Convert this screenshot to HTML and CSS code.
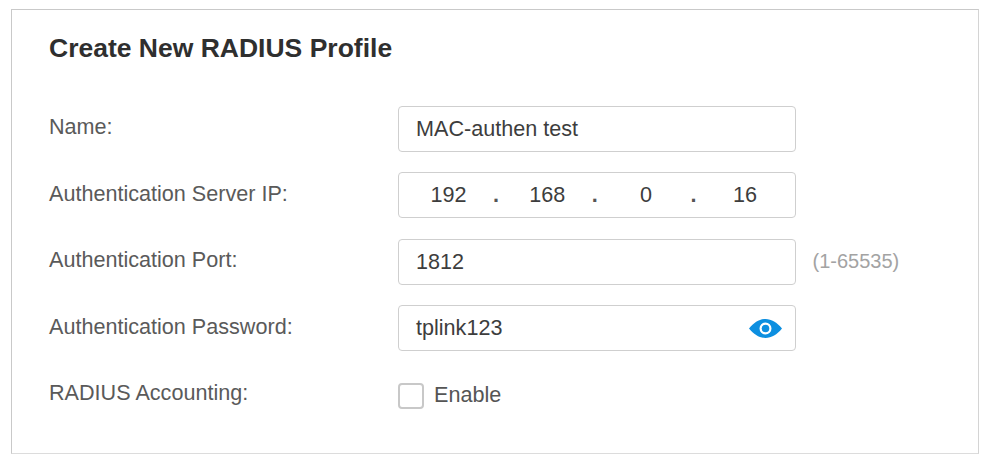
FILE: index.html
```html
<!DOCTYPE html>
<html lang="en">
<head>
<meta charset="utf-8">
<title>Create New RADIUS Profile</title>
<link rel="stylesheet" href="styles.css">
</head>
<body>
<section class="panel">
  <h1 class="title">Create New RADIUS Profile</h1>
  <div class="form">
    <div class="row">
      <div class="label">Name:</div>
      <div class="field">MAC-authen test</div>
    </div>
    <div class="row">
      <div class="label">Authentication Server IP:</div>
      <div class="field field-ip">
        <span class="octet">192</span><span class="dot">.</span>
        <span class="octet">168</span><span class="dot">.</span>
        <span class="octet">0</span><span class="dot">.</span>
        <span class="octet">16</span>
      </div>
    </div>
    <div class="row">
      <div class="label">Authentication Port:</div>
      <div class="field">1812</div>
      <div class="hint">(1-65535)</div>
    </div>
    <div class="row">
      <div class="label">Authentication Password:</div>
      <div class="field field-pass">
        <span>tplink123</span>
        <svg class="eye" viewBox="0 0 33 19" aria-hidden="true">
          <path fill="#0d8fe0" fill-rule="evenodd" d="M0 9.5C5 3.5 10.5 0 16.5 0S28 3.5 33 9.5C28 15.5 22.5 19 16.5 19S5 15.5 0 9.5ZM16.5 3.5a6 6 0 1 0 0 12a6 6 0 1 0 0-12Z"/>
          <circle cx="16.5" cy="9.5" r="3.8" fill="#0d8fe0"/>
        </svg>
      </div>
    </div>
    <div class="row row-check">
      <div class="label">RADIUS Accounting:</div>
      <label class="check"><span class="box"></span><span>Enable</span></label>
    </div>
  </div>
</section>
</body>
</html>
```
FILE: styles.css
```css
html, body {
  margin: 0;
  padding: 0;
  background: #fff;
}
body {
  width: 986px;
  height: 469px;
  overflow: hidden;
  font-family: "Liberation Sans", Arial, sans-serif;
  color: #555;
}
.panel {
  box-sizing: border-box;
  width: 968px;
  height: 445px;
  margin: 9px 0 0 11px;
  padding: 23px 37px 0;
  border: 1px solid #c9c9c9;
  border-right-color: #d4d4d4;
  border-bottom-color: #dcdcdc;
}
.title {
  margin: 0 0 42.5px;
  font-size: 26.5px;
  line-height: 30px;
  font-weight: bold;
  color: #2f2f2f;
}
.form {
  display: flex;
  flex-direction: column;
  gap: 20.5px;
}
.row {
  display: flex;
  align-items: center;
  height: 46px;
}
.label {
  width: 349px;
  flex: none;
  font-size: 21.6px;
  line-height: 24px;
  color: #5a5a5a;
  position: relative;
  top: -1.5px;
}
.field {
  box-sizing: border-box;
  width: 397.5px;
  height: 46px;
  flex: none;
  display: flex;
  align-items: center;
  padding: 0 17px;
  border: 1.5px solid #cfcfcf;
  border-radius: 4px;
  font-size: 21.6px;
  color: #3d3d3d;
  background: #fff;
}
.field-ip {
  padding: 0 31.5px;
  justify-content: space-between;
}
.octet {
  width: 36px;
  text-align: center;
}
.dot {
  font-weight: bold;
  color: #555;
  width: 10px;
  text-align: left;
}
.field-pass {
  justify-content: space-between;
  padding-right: 13px;
}
.eye {
  width: 33px;
  height: 19px;
  display: block;
}
.hint {
  margin-left: 17px;
  font-size: 20px;
  color: #a3a3a3;
}
.check {
  display: flex;
  align-items: center;
  gap: 10px;
  font-size: 21.6px;
  color: #555;
}
.box {
  box-sizing: border-box;
  width: 26px;
  height: 26px;
  border: 2px solid #c8c8c8;
  border-radius: 4px;
  background: #fff;
  position: relative;
  top: 1.5px;
}
```
